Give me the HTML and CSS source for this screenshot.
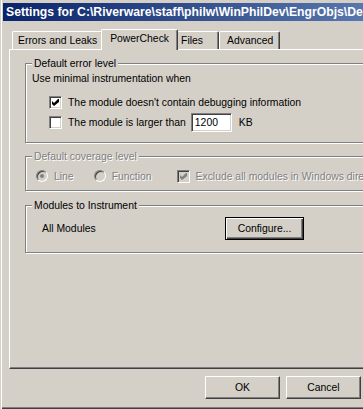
FILE: index.html
```html
<!DOCTYPE html>
<html lang="en">
<head>
    <meta charset="UTF-8">
    <title>Settings</title>
    <link rel="stylesheet" href="styles.css">
</head>
<body>
    <div class="window">
        <div class="titlebar">Settings for C:\Riverware\staff\philw\WinPhilDev\EngrObjs\DebugWin32\EngrObjs.dll</div>
        <div class="content">
            <div class="tabs">
                <div class="tab">Errors and Leaks</div>
                <div class="tab active">PowerCheck</div>
                <div class="tab tab-files">Files</div>
                <div class="tab tab-advanced">Advanced</div>
            </div>
            <div class="panel">
                <!-- Default error level -->
                <div class="group group-error">
                    <span class="legend">Default error level</span>
                    <div class="line">Use minimal instrumentation when</div>
                    <div class="check-row first">
                        <span class="checkbox"><svg width="7" height="7" viewBox="0 0 7 7"><polygon points="0,2 2,4 6,0 7,0 7,3 2,7 0,5" fill="#000"/></svg></span>
                        <span>The module doesn't contain debugging information</span>
                    </div>
                    <div class="check-row">
                        <span class="checkbox"></span>
                        <span>The module is larger than</span>
                        <span class="textbox">1200</span>
                        <span class="unit">KB</span>
                    </div>
                </div>

                <!-- Default coverage level (disabled) -->
                <div class="group group-coverage disabled">
                    <span class="legend">Default coverage level</span>
                    <div class="option-row">
                        <span class="radio checked"></span>
                        <span class="label-line">Line</span>
                        <span class="radio"></span>
                        <span class="label-function">Function</span>
                        <span class="checkbox"><svg width="7" height="7" viewBox="0 0 7 7"><polygon points="0,2 2,4 6,0 7,0 7,3 2,7 0,5" fill="#808080"/></svg></span>
                        <span>Exclude all modules in Windows directory</span>
                    </div>
                </div>

                <!-- Modules to Instrument -->
                <div class="group group-modules">
                    <span class="legend">Modules to Instrument</span>
                    <div class="modules-row">
                        <span class="modules-name">All Modules</span>
                        <span class="button default">Configure...</span>
                    </div>
                </div>
            </div>
            <div class="buttons">
                <span class="button">OK</span>
                <span class="button">Cancel</span>
            </div>
        </div>
    </div>
</body>
</html>
```

FILE: styles.css
```css
/* Osnovno - klasicni Windows izgled */
body {
    margin: 0;
    background-color: #d4d0c8;
    font-family: "Liberation Sans", Arial, sans-serif;
    font-size: 10.4px;
    color: #000;
    overflow: hidden;
}

.window {
    width: 460px;
    height: 409px;
    box-sizing: border-box;
    padding: 3px 0 0 3px;
    box-shadow: inset 1px 0 #d4d0c8, inset 2px 0 #fff, inset 0 -1px #404040, inset 0 -2px #808080;
}

.titlebar {
    height: 18px;
    line-height: 18px;
    padding-left: 3px;
    color: #fff;
    font-weight: bold;
    font-size: 12.2px;
    white-space: nowrap;
    overflow: hidden;
    background: linear-gradient(to right, #0a246a 0, #a6caf0 720px);
}

.content {
    padding-left: 6px;
}

/* Kartice */
.tabs {
    display: flex;
    align-items: flex-end;
    height: 22px;
    margin: 6px 0 0 3px;
}

.tab {
    height: 17px;
    line-height: 17px;
    padding: 0 5px;
    border: 1px solid;
    border-color: #fff #404040 transparent #fff;
    border-bottom: none;
    border-radius: 2px 2px 0 0;
    box-shadow: inset -1px 0 #808080;
}

.tab.active {
    position: relative;
    z-index: 1;
    height: 20px;
    line-height: 18px;
    margin: 0 -2px -1px;
    padding: 0 8px;
    background-color: #d4d0c8;
}

.tab-files {
    padding: 0 15px 0 4px;
}

.tab-advanced {
    padding: 0 6px 0 7px;
}

.panel {
    height: 320px;
    box-sizing: border-box;
    border: 1px solid;
    border-color: #fff #404040 #404040 #fff;
    box-shadow: inset -1px -1px #808080;
    padding: 13px 0 0 15px;
}

/* Okviri grupa */
.group {
    position: relative;
    box-sizing: border-box;
    border: 1px solid #808080;
    box-shadow: inset 1px 1px #fff, 1px 1px #fff;
}

.legend {
    position: absolute;
    top: -7px;
    left: 6px;
    padding: 0 2px;
    line-height: 13px;
    background-color: #d4d0c8;
}

.group-error {
    height: 80px;
    padding: 8px 0 0 6px;
}

.line {
    line-height: 13px;
}

.check-row {
    display: flex;
    align-items: center;
    height: 20px;
    margin-left: 17px;
}

.check-row.first {
    margin-top: 7px;
}

.check-row .checkbox {
    margin-right: 6px;
}

.checkbox {
    width: 13px;
    height: 13px;
    box-sizing: border-box;
    border: 1px solid;
    border-color: #808080 #fff #fff #808080;
    box-shadow: inset 1px 1px #404040, inset -1px -1px #d4d0c8;
    background-color: #fff;
    display: flex;
    align-items: center;
    justify-content: center;
    flex-shrink: 0;
}

.textbox {
    width: 41px;
    height: 19px;
    box-sizing: border-box;
    margin-left: 5px;
    padding: 0 3px;
    line-height: 17px;
    border: 1px solid;
    border-color: #808080 #fff #fff #808080;
    box-shadow: inset 1px 1px #404040, inset -1px -1px #d4d0c8;
    background-color: #fff;
}

.unit {
    margin-left: 7px;
}

.group-coverage {
    height: 35px;
    margin-top: 13px;
    padding: 0 0 0 10px;
}

.disabled {
    color: #808080;
    text-shadow: 1px 1px #fff;
}

.option-row {
    display: flex;
    align-items: center;
    height: 40px;
    margin-top: -1px;
    white-space: nowrap;
}

.option-row .checkbox {
    background-color: #d4d0c8;
    margin-right: 6px;
}

.radio {
    width: 12px;
    height: 12px;
    box-sizing: border-box;
    border-radius: 50%;
    border: 1px solid;
    border-color: #808080 #fff #fff #808080;
    box-shadow: inset 1px 1px #404040;
    background-color: #d4d0c8;
    display: flex;
    align-items: center;
    justify-content: center;
    flex-shrink: 0;
    margin-right: 6px;
}

.radio.checked::after {
    content: "";
    width: 4px;
    height: 4px;
    border-radius: 50%;
    background-color: #808080;
}

.label-line {
    margin-right: 20px;
}

.label-function {
    margin-right: 25px;
}

.group-modules {
    height: 48px;
    margin-top: 14px;
    padding: 11px 0 0 16px;
}

.modules-row {
    display: flex;
    align-items: center;
}

.modules-name {
    width: 183px;
}

/* Gumbi */
.button {
    display: flex;
    align-items: center;
    justify-content: center;
    width: 75px;
    height: 23px;
    box-sizing: border-box;
    border: 1px solid;
    border-color: #fff #404040 #404040 #fff;
    box-shadow: inset -1px -1px #808080;
}

.button.default {
    width: 79px;
    border-color: #000;
    box-shadow: inset 1px 1px #fff, inset -1px -1px #404040, inset -2px -2px #808080;
}

.buttons {
    display: flex;
    gap: 6px;
    margin-top: 7px;
    padding-left: 196px;
}
```
